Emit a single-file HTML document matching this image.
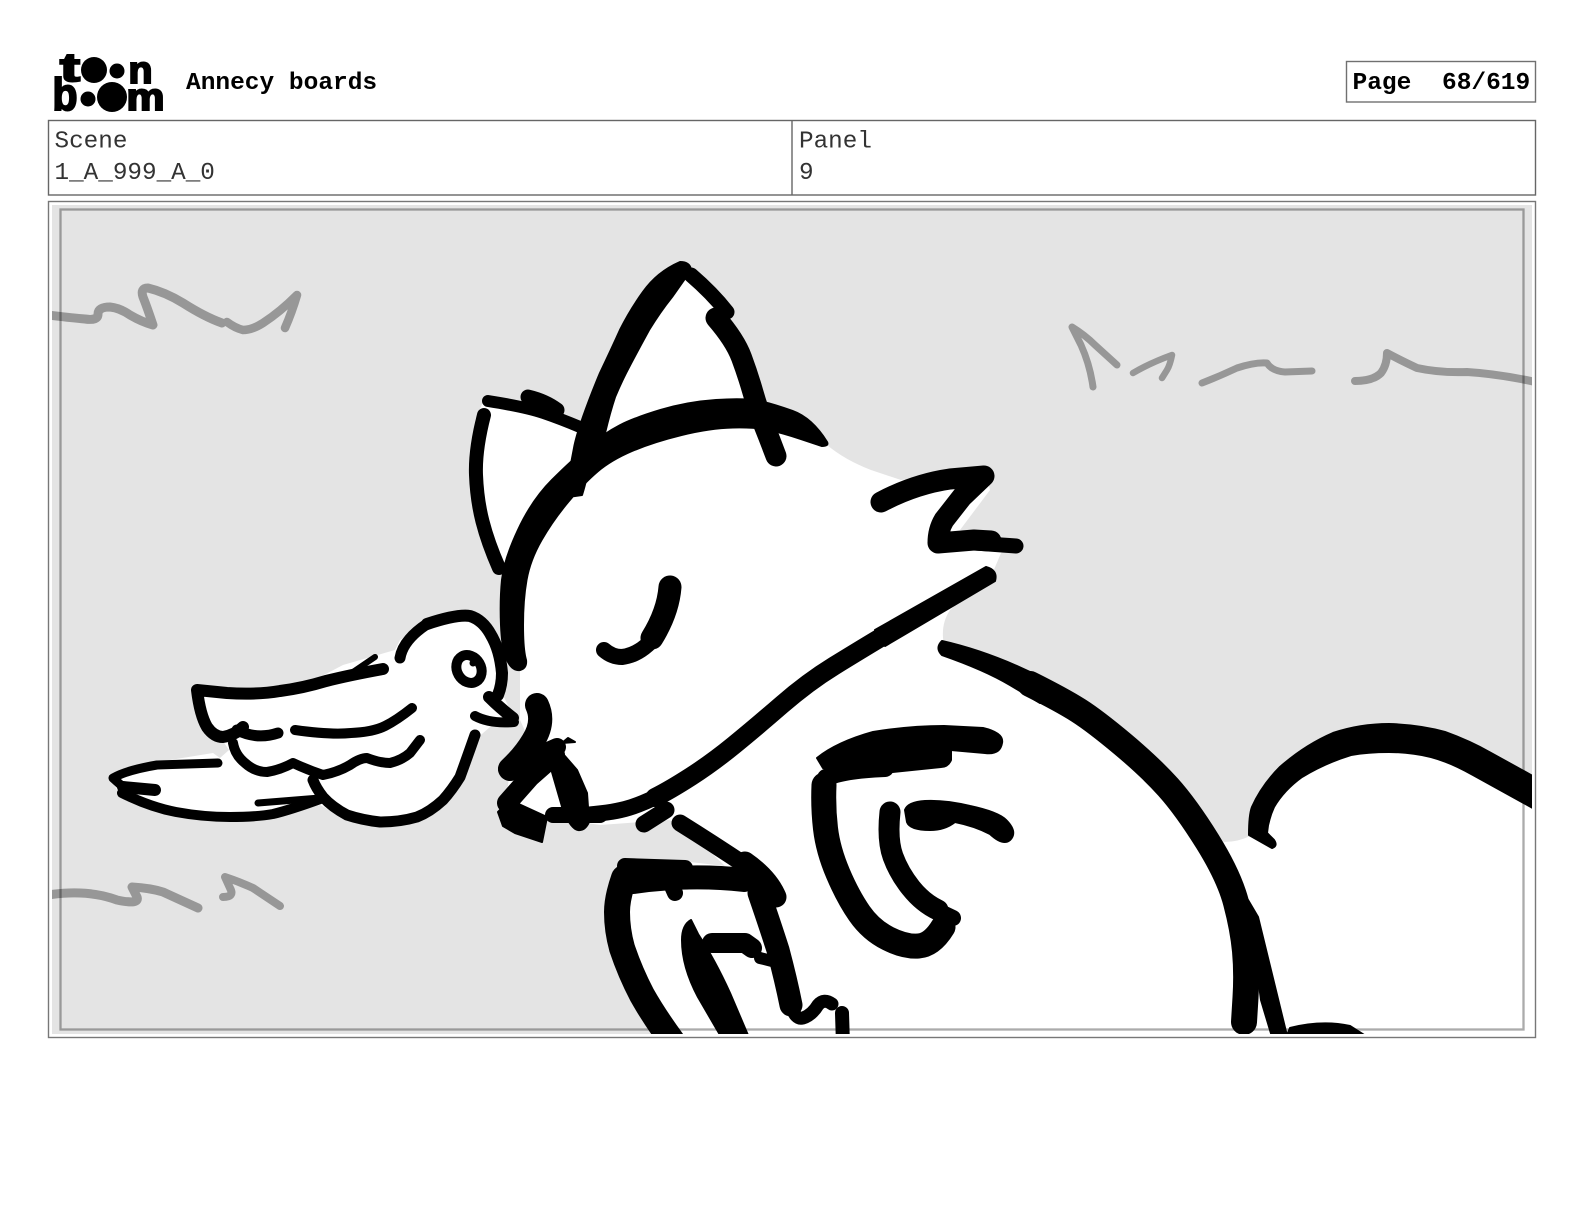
<!DOCTYPE html>
<html><head><meta charset="utf-8"><title>Annecy boards</title>
<style>
html,body{margin:0;padding:0;background:#fff}
svg{display:block}
.k{fill:none;stroke:#000;stroke-linecap:round;stroke-linejoin:round}
.g{fill:none;stroke:#979797;stroke-linecap:round;stroke-linejoin:round}
.f{fill:#000;stroke:#000;stroke-width:2;stroke-linejoin:round}
.m{font-family:"Liberation Mono",monospace;font-size:24.3px;fill:#333}
.b{font-family:"Liberation Mono",monospace;font-size:24.5px;font-weight:bold;fill:#000}
.l{font-family:"Liberation Sans",sans-serif;font-weight:bold;fill:#000;stroke:#000;stroke-width:2}
</style></head><body>
<svg width="1584" height="1224" viewBox="0 0 1584 1224" xmlns="http://www.w3.org/2000/svg">
<defs><clipPath id="c"><rect x="52" y="205" width="1480" height="829"/></clipPath></defs>
<rect width="1584" height="1224" fill="#fff"/>

<!-- logo -->
<text class="l" x="60" y="81" font-size="40" textLength="20" lengthAdjust="spacingAndGlyphs">t</text>
<circle cx="94" cy="70" r="13"/><circle cx="117" cy="71" r="7.5"/>
<text class="l" x="128.5" y="83" font-size="38" textLength="24" lengthAdjust="spacingAndGlyphs">n</text>
<text class="l" x="52.5" y="110" font-size="45" textLength="25" lengthAdjust="spacingAndGlyphs">b</text>
<circle cx="88" cy="99" r="7.5"/><circle cx="112" cy="97" r="15"/>
<text class="l" x="126.5" y="110" font-size="38" textLength="38" lengthAdjust="spacingAndGlyphs">m</text>

<text class="b" x="186" y="89">Annecy boards</text>
<rect x="1346.5" y="61.5" width="189" height="40.5" fill="none" stroke="#707070" stroke-width="1.4"/>
<text class="b" x="1352.5" y="89">Page</text>
<text class="b" x="1442" y="89">68/619</text>

<rect x="48.5" y="120.5" width="1487" height="74.5" fill="none" stroke="#666" stroke-width="1.4"/>
<line x1="792" y1="120" x2="792" y2="195" stroke="#666" stroke-width="1.4"/>
<text class="m" x="54.5" y="147.5">Scene</text>
<text class="m" x="54.5" y="179">1_A_999_A_0</text>
<text class="m" x="799" y="147.5">Panel</text>
<text class="m" x="799" y="179">9</text>

<rect x="48.5" y="201.5" width="1487" height="836" fill="none" stroke="#777" stroke-width="1.4"/>

<g clip-path="url(#c)">
<rect x="52" y="205" width="1480" height="829" fill="#e4e4e4"/>

<!-- white fills -->
<path fill="#fff" d="M684 266L730 320L770 430L827 445Q845 460 871 470L901 480L985 470L990 490L960 530L1022 540L1001 553L993 572L950 610Q940 625 944 645L1020 680L1100 740L1170 800L1224 842Q1238 842 1250 836L1255 810L1262 790L1300 750L1350 733L1395 728L1450 740L1532 785L1532 1034L660 1034L615 960L605 900L621 866L690 862L725 866L701 843L678 823L669 820L600 825L548 817L505 808L510 770L526 733L520 720L520 660L505 600L500 570L472 490L475 420L484 400L576 430L590 400L640 300Z"/>
<path fill="#fff" d="M395 650L343 665L320 677L260 690L195 688L195 700L229 750L220 758L213 753L170 760L130 768L110 778L120 795L150 810L200 820L260 820L320 805L340 815L380 826L440 803L460 780L475 740L490 727L515 720L503 695L505 660L490 625L457 612L430 622L400 640Z"/>

<!-- grey strokes -->
<path class="g" stroke-width="9" d="M48 315Q73 318 85 319Q98 321 98 314Q98 307 110 307Q120 308 130 315Q142 322 153 325Q147 307 143 297Q140 288 148 288Q165 292 183 303Q205 317 222 323"/>
<path class="g" stroke-width="8.5" d="M227 322Q235 328 243 330Q252 330 263 323Q280 312 297 295Q292 312 285 328"/>
<path class="g" stroke-width="7" d="M1093 387Q1090 365 1081 345L1072 327Q1085 335 1095 345L1117 365"/>
<path class="g" stroke-width="6.5" d="M1133 373Q1150 363 1172 355Q1170 365 1167 370L1162 378"/>
<path class="g" stroke-width="7" d="M1202 383Q1220 376 1237 368Q1255 362 1267 363Q1272 371 1285 372L1312 371"/>
<path class="g" stroke-width="8" d="M1355 381Q1373 381 1381 373Q1387 365 1387 353Q1400 360 1417 368Q1440 373 1467 372Q1500 374 1540 383"/>
<path class="g" stroke-width="9" d="M48 895Q87 889 117 900Q140 905 137 897L132 887Q150 888 163 892L198 908"/>
<path class="g" stroke-width="8" d="M223 897Q235 897 230 888L225 877Q240 882 253 888L280 906"/>

<!-- safe frame -->
<rect x="60.5" y="209.5" width="1463" height="820" fill="none" stroke="#000" stroke-opacity=".33" stroke-width="2.3"/>

<!-- fox ears and head -->
<path class="f" d="M680 262Q657 272 643 292Q630 310 620 330Q611 350 600 373Q590 397 583 417Q576 437 574 448L566 490Q568 497 575 496L582 495Q585 485 586 480Q600 450 605 433Q610 412 615 397Q620 385 626 373Q638 350 649 330Q660 312 672 297L691 270Q690 262 680 262Z"/>
<path class="k" stroke-width="15" d="M691 275Q712 293 727 312"/>
<path class="k" stroke-width="21" d="M716 318Q735 340 741.5 357.5Q748 375 753 392.5Q758 410 764 425Q770 440 776 456"/>
<path class="f" d="M827 442Q812 418 792.5 411Q773 404 759 401Q745 398 716 400Q687 402 660.5 410Q634 418 619.5 425.5Q605 433 588.5 446.5Q572 460 552 480Q532 500 518 530Q504 560 502 580Q500 600 501 625Q502 650 507 660Q512 671 520 670Q527 668 526 660Q523 650 523 625Q523 600 526.5 580Q530 560 541.5 540Q553 520 568.5 501.5Q584 483 597.5 471.5Q611 460 632 451Q653 442 681.5 435Q710 428 733 427.5Q756 427 769.5 430Q783 433 801 439L822 446Q829 446 827 442Z"/>
<path class="k" stroke-width="14" d="M484 415Q475 450 476 475Q477 500 482.5 521.5Q488 543 499 568"/>
<path class="k" stroke-width="12" d="M488 401Q526 407 543.5 413Q561 419 580 427"/>
<path class="k" stroke-width="15" d="M528 397Q545 401 557 410"/>

<!-- snout lines -->
<path class="k" stroke-width="21" d="M881 502Q915 484 950 479L984 476L962 497L944 520Q938 530 938 543L974 540L991 541"/>
<path class="k" stroke-width="15" d="M975 543L1016 546"/>
<path class="f" d="M986 567L875 630L885 646L995 581Q998 570 986 567Z"/>
<path class="k" stroke-width="19" d="M880 638Q860 650 834 666Q808 682 781.5 705Q755 728 733.5 745.5Q712 763 691 776.5Q670 790 655 797.5"/>
<path class="k" stroke-width="16" d="M660 795Q640 805 625 809Q610 813 583 815"/>
<path class="k" stroke-width="23" d="M670 587Q668 612 652 638"/>
<path class="k" stroke-width="16" d="M656 636Q640 655 622 657Q612 657 604 650"/>

<!-- nose -->
<path class="k" stroke-width="24" d="M537 705Q545 722 533 741Q524 756 510 769"/>
<path class="k" stroke-width="18" d="M507 769L557 747"/>
<path class="k" stroke-width="20" d="M507 803L530 777L555 755"/>
<path class="f" d="M557 747L577 770L587 793L589 822Q585 831 578 830Q571 829 563 810L552 772Z"/>
<path class="f" d="M498 812L510 800L547 817L542 842L515 833L503 826Z"/>
<path class="k" stroke-width="16" d="M553 815L600 815"/>
<path class="k" stroke-width="17" d="M644 824L666 810"/>
<path class="f" stroke-width="0.5" d="M562 743L568 738L575 742Z"/>

<!-- arms -->
<path class="f" d="M817 758Q837 742 873 732Q910 726 944 726L983 728Q1004 733 1002 743Q1000 755 985 753L951 750L951 760Q948 767 941 767L883 773L823 768Z"/>
<path class="k" stroke-width="25" d="M824 785Q823 807 825.5 828.5Q828 850 838 873.5Q848 897 859.5 913.5Q871 930 888 938.5Q905 947 918.5 946Q932 945 943 927"/>
<path class="k" stroke-width="18" d="M826 778Q840 770 885 768"/>
<path class="k" stroke-width="21" d="M890 812Q887 840 893 856.5Q899 873 911 888Q923 903 938 910"/>
<path class="k" stroke-width="16" d="M932 908L953 918"/>
<path class="f" d="M905 810Q908 802 925 801Q945 800 970 806Q998 812 1006 820Q1018 832 1010 840Q1003 846 990 834Q975 826 955 822Q945 830 930 830Q910 830 907 822Z"/>

<!-- left leg -->
<path class="k" stroke-width="16" d="M625 866L685 868"/>
<path class="k" stroke-width="26" d="M624 878Q617 898 617 912Q617 930 622 948Q630 972 642 995Q655 1018 675 1045"/>
<path class="k" stroke-width="24" d="M633 882Q690 874 744 880"/>
<path class="k" stroke-width="16" d="M671 884L675 893"/>
<path class="k" stroke-width="17" d="M680 823Q712 843 745 865"/>
<path class="k" stroke-width="21" d="M745 862Q768 878 776 897"/>
<path class="k" stroke-width="23" d="M759 893Q770 925 778 950Q786 980 791 1005"/>
<path class="k" stroke-width="13" d="M791 1005Q795 1020 803 1018Q812 1015 818 1005Q824 998 832 1004"/>
<path class="k" stroke-width="14" d="M842 1013L843 1045"/>
<path class="f" d="M691 920Q682 925 682 940Q682 967 698 997L723 1040L750 1040L730 993Q715 960 698 934Z"/>
<path class="k" stroke-width="20" d="M712 943L745 943L752 948"/>
<path class="k" stroke-width="12" d="M760 958L776 962"/>

<!-- body -->
<path class="f" d="M942 641Q995 653 1050 682L1040 703L1010 685Q985 670 942 655Q935 648 942 641Z"/>
<path class="k" stroke-width="26" d="M1030 684Q1062 700 1078.5 710.5Q1095 721 1122.5 744Q1150 767 1168 787Q1186 807 1207.5 841.5Q1229 876 1236 902.5Q1243 929 1245 951Q1247 973 1245.5 997.5L1244 1022"/>
<path class="f" d="M1248 900L1258 917L1288 1040L1273 1040L1261 1000Z"/>
<path class="f" d="M1285 1040L1290 1028Q1322 1020 1350 1026L1372 1040Z"/>
<path class="f" d="M1249 835Q1249 815 1252 807Q1262 785 1280 767Q1305 745 1333 733Q1360 724 1389 724Q1420 725 1445 732Q1470 741 1491 753L1540 780L1540 812L1473 775Q1450 762 1431 757Q1410 752 1389 752Q1368 752 1351 755Q1325 763 1302 777Q1284 790 1274 807Q1268 820 1267 833L1274 840Q1278 846 1272 848Z"/>

<!-- bird -->
<path class="k" stroke-width="11" d="M400 658Q403 640 427 624"/>
<path class="k" stroke-width="12" d="M427 624Q457 614 470 616Q483 620 491 635Q500 650 502 673Q502 685 498 695"/>
<ellipse cx="469" cy="669" rx="12" ry="14.5" fill="#fff" stroke="#000" stroke-width="10" transform="rotate(-30 469 669)"/>
<circle cx="473" cy="663" r="3.5"/>
<path class="k" stroke-width="12" d="M489 697Q500 708 513 718"/>
<path class="k" stroke-width="10" d="M475 716Q490 724 514 722"/>
<path class="k" stroke-width="11" d="M475 735Q468 755 460 777Q452 790 443 800Q430 812 417 817Q400 822 380 822Q362 820 347 815Q332 807 323 797Q316 788 313 780"/>
<path class="k" stroke-width="12" d="M383 669Q350 675 326 681Q303 688 280 691Q257 695 227 693L197 690Q200 715 207 727Q214 737 223 737Q235 735 243 727"/>
<path class="k" stroke-width="6" d="M375 657L353 672"/>
<path class="k" stroke-width="11" d="M237 730Q257 740 278 733"/>
<path class="k" stroke-width="10" d="M295 730Q330 735 351 733Q373 732 385 726Q397 720 412 708"/>
<path class="k" stroke-width="10" d="M233 743Q235 755 245 763Q255 772 267 772Q280 770 293 763Q308 770 323 775Q338 772 350 765Q360 758 367 758Q380 763 390 763Q402 760 410 753L420 740"/>
<path class="k" stroke-width="9" d="M218 763L157 765Q127 770 113 778L123 787"/>
<path class="k" stroke-width="12" d="M123 787L155 790"/>
<path class="k" stroke-width="10" d="M122 793Q150 807 176 812Q203 817 230 817Q257 817 273 814Q290 810 323 798"/>
<path class="k" stroke-width="7" d="M258 803L320 798"/>
</g>
</svg>
</body></html>
